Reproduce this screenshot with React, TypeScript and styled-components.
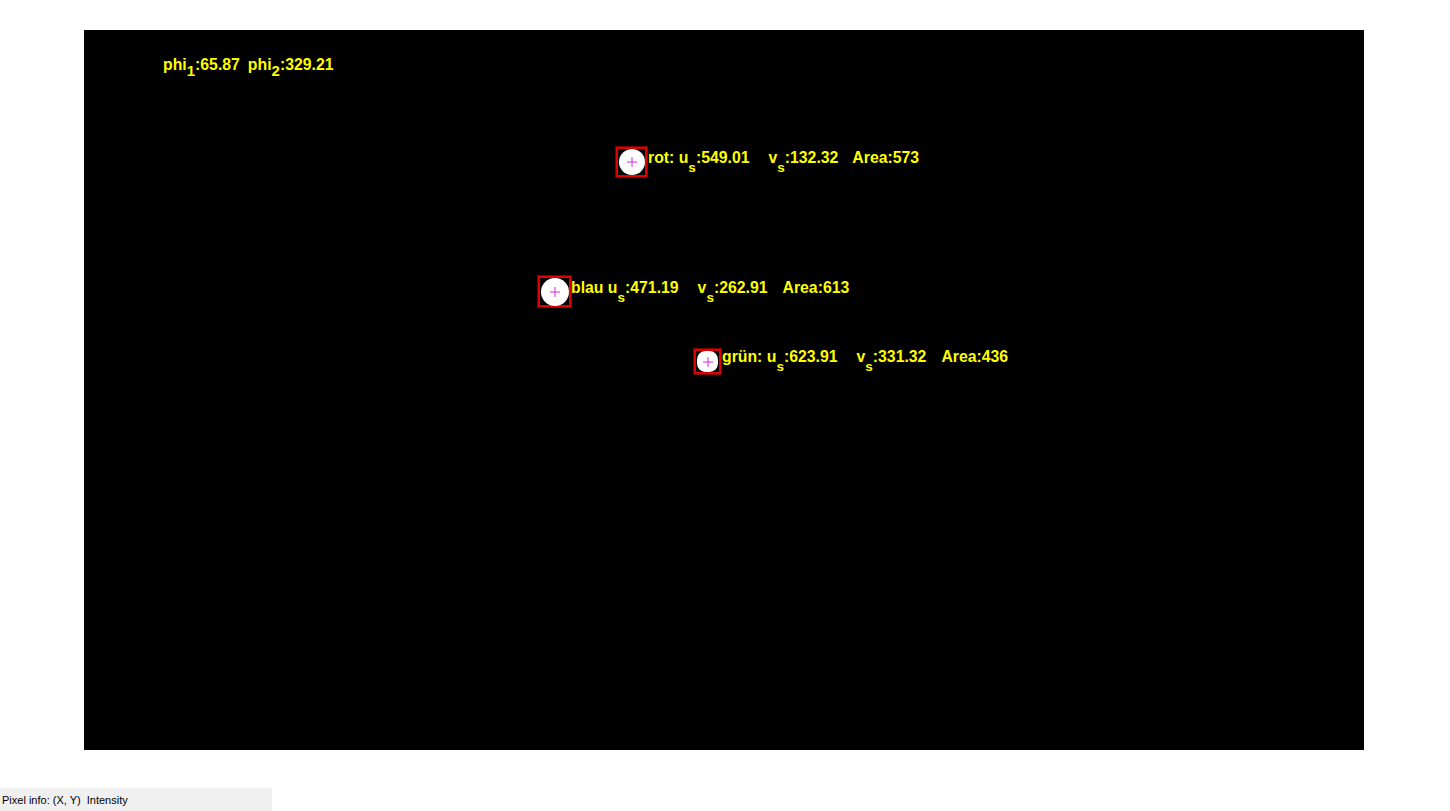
import React from "react";
import styled, { createGlobalStyle } from "styled-components";

const Global = createGlobalStyle`
  html, body { margin: 0; padding: 0; background: #ffffff; }
  body { width: 1450px; height: 811px; overflow: hidden; font-family: "Liberation Sans", Arial, sans-serif; }
`;

const Page = styled.div`
  display: flex;
  flex-direction: column;
  align-items: flex-start;
  padding-top: 30px;
`;

const Canvas = styled.div`
  position: relative;
  margin-left: 84px;
  width: 1280px;
  height: 720px;
  background: #000000;
  overflow: hidden;
`;

const Label = styled.div<{ $x: number; $y: number }>`
  position: absolute;
  left: ${(p) => p.$x}px;
  top: ${(p) => p.$y}px;
  display: flex;
  align-items: baseline;
  font-family: "Liberation Sans", Arial, sans-serif;
  font-weight: 700;
  font-size: 15.8px;
  line-height: 16px;
  color: #ffff00;
  white-space: pre;
`;

const Seg = styled.span<{ $gap?: number }>`
  margin-left: ${(p) => p.$gap ?? 0}px;
`;

const Sub = styled.span<{ $dy: number; $size: number }>`
  position: relative;
  top: ${(p) => p.$dy}px;
  font-size: ${(p) => p.$size}px;
`;

const Box = styled.div<{ $x: number; $y: number; $w: number; $h: number }>`
  position: absolute;
  left: ${(p) => p.$x}px;
  top: ${(p) => p.$y}px;
  width: ${(p) => p.$w}px;
  height: ${(p) => p.$h}px;
  box-sizing: border-box;
  border: 2px solid #e00000;
  outline: 1px solid #7a0000;
  display: flex;
  align-items: center;
  justify-content: center;
`;

const Blob = styled.div<{ $d: number; $round: string }>`
  width: ${(p) => p.$d}px;
  height: ${(p) => p.$d}px;
  border-radius: ${(p) => p.$round};
  background: #ffffff;
  position: relative;
`;

const Cross = styled.svg`
  position: absolute;
  left: 50%;
  top: 50%;
  transform: translate(-50%, -50%);
`;

const InfoBar = styled.div`
  margin-top: 38px;
  width: 272px;
  height: 23px;
  background: #f0f0f0;
  display: flex;
  align-items: center;
  padding-left: 2px;
  box-sizing: border-box;
  font-family: "Liberation Sans", Arial, sans-serif;
  font-size: 11px;
  color: #000000;
  white-space: pre;
`;

type Blb = { x: number; y: number; w: number; h: number; d: number; r: string };

const blobs: Blb[] = [
  { x: 532, y: 117, w: 31, h: 30, d: 26, r: "50%" },
  { x: 454, y: 246, w: 33, h: 31, d: 28, r: "50%" },
  { x: 610, y: 319, w: 27, h: 25, d: 21, r: "40%" },
];

type Lbl = { x: number; y: number; name: string; u: string; v: string; area: string; g1: number; g2: number };

const labels: Lbl[] = [
  { x: 564, y: 120, name: "rot: u", u: ":549.01", v: ":132.32", area: "Area:573", g1: 19, g2: 14 },
  { x: 487, y: 250, name: "blau u", u: ":471.19", v: ":262.91", area: "Area:613", g1: 19, g2: 15 },
  { x: 638, y: 319, name: "grün: u", u: ":623.91", v: ":331.32", area: "Area:436", g1: 19, g2: 15 },
];

export default function App() {
  return (
    <>
      <Global />
      <Page>
        <Canvas>
          <Label $x={79} $y={27}>
            <Seg>
              phi<Sub $dy={6} $size={15}>1</Sub>:65.87
            </Seg>
            <Seg $gap={8}>
              phi<Sub $dy={6} $size={15}>2</Sub>:329.21
            </Seg>
          </Label>
          {blobs.map((b, i) => (
            <Box key={i} $x={b.x} $y={b.y} $w={b.w} $h={b.h}>
              <Blob $d={b.d} $round={b.r}>
                <Cross width="11" height="11" viewBox="0 0 11 11">
                  <line x1="0.5" y1="5.5" x2="10.5" y2="5.5" stroke="#e020e0" strokeWidth="1" />
                  <line x1="5.5" y1="0.5" x2="5.5" y2="10.5" stroke="#e020e0" strokeWidth="1" />
                </Cross>
              </Blob>
            </Box>
          ))}
          {labels.map((l, i) => (
            <Label key={i} $x={l.x} $y={l.y}>
              <Seg>
                {l.name}
                <Sub $dy={9} $size={13.5}>s</Sub>
                {l.u}
              </Seg>
              <Seg $gap={l.g1}>
                v<Sub $dy={9} $size={13.5}>s</Sub>
                {l.v}
              </Seg>
              <Seg $gap={l.g2}>{l.area}</Seg>
            </Label>
          ))}
        </Canvas>
        <InfoBar>Pixel info: (X, Y)  Intensity</InfoBar>
      </Page>
    </>
  );
}
